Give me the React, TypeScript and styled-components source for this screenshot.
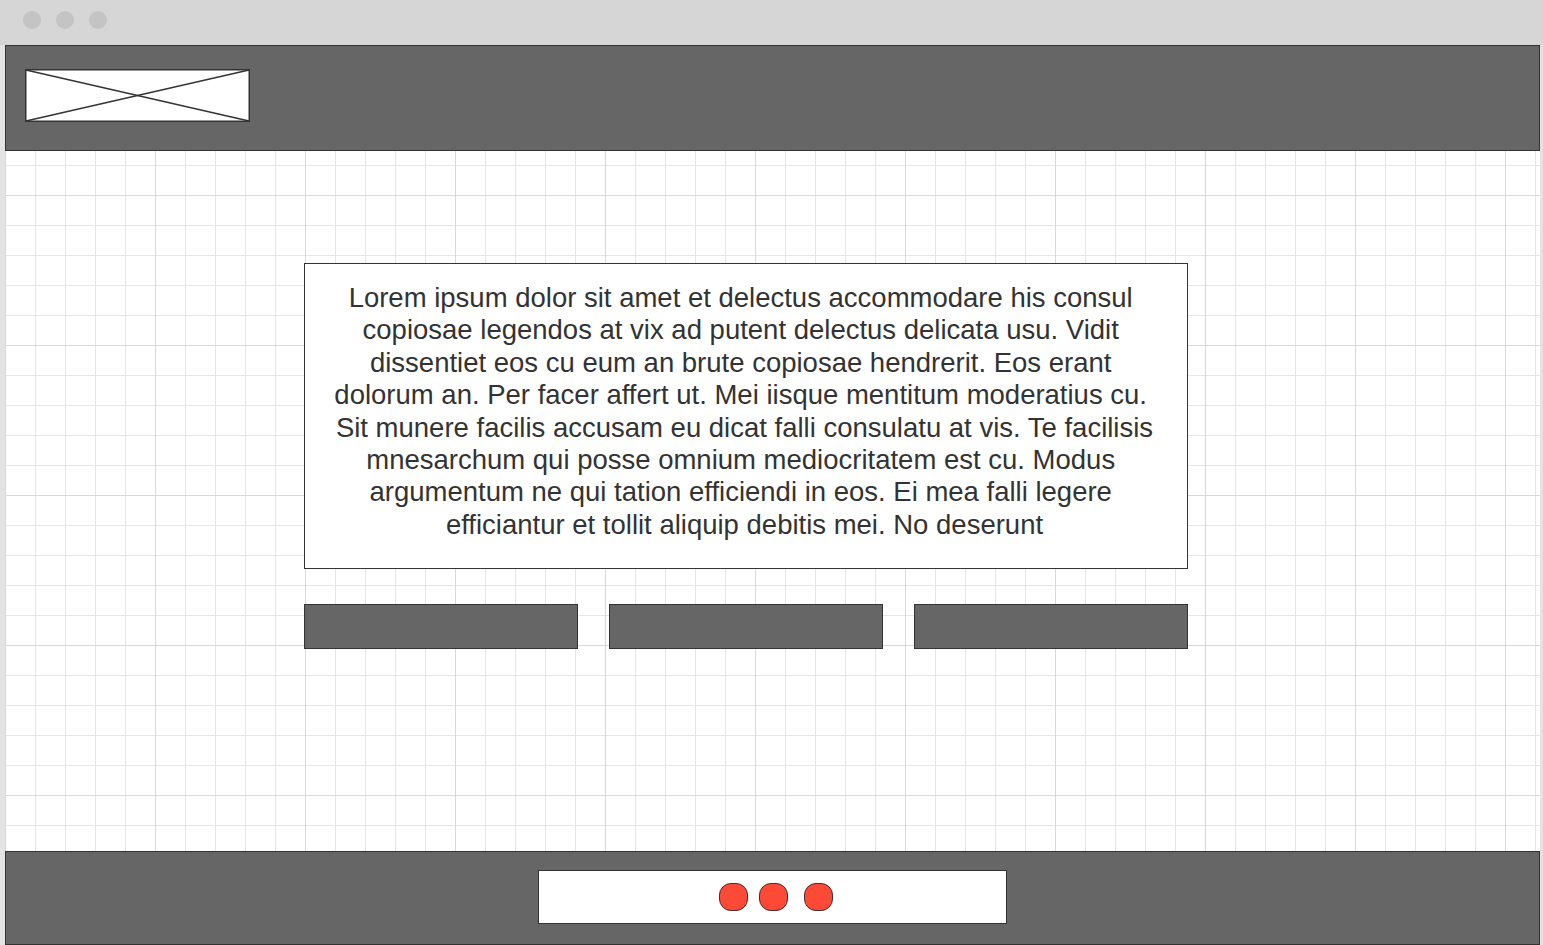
import React from "react";
import styled, { createGlobalStyle } from "styled-components";

const GlobalStyle = createGlobalStyle`
  html, body { margin: 0; padding: 0; }
  body {
    background: #e3e3e3;
    font-family: "Liberation Sans", Arial, sans-serif;
    overflow: hidden;
  }
`;

const Window = styled.div`
  width: 1543px;
  height: 945px;
  display: flex;
  flex-direction: column;
  background: #e3e3e3;
`;

const TitleBar = styled.div`
  height: 45px;
  flex: none;
  background: #d6d6d6;
  display: flex;
  align-items: center;
  gap: 15px;
  padding: 0 0 6px 23px;
  box-sizing: border-box;
`;

const TitleDot = styled.span`
  width: 18px;
  height: 18px;
  border-radius: 50%;
  background: #c4c4c4;
`;

const Body = styled.div`
  flex: 1;
  display: flex;
  flex-direction: column;
  margin: 0 3px 0 5px;
  background-color: #fff;
  background-image:
    linear-gradient(to right, #d8d8d8 1px, transparent 1px),
    linear-gradient(to bottom, #d8d8d8 1px, transparent 1px),
    linear-gradient(to right, #e6e6e6 1.5px, transparent 1.5px),
    linear-gradient(to bottom, #e6e6e6 1.5px, transparent 1.5px);
  background-size: 150px 150px, 150px 150px, 30px 30px, 30px 30px;
`;

const Header = styled.header`
  height: 106px;
  flex: none;
  box-sizing: border-box;
  background: #666;
  border: 1px solid #333;
  padding: 23px 19px;
  display: flex;
  align-items: flex-start;
`;

const Canvas = styled.main`
  flex: 1;
  padding: 112px 0 0 299px;
  display: flex;
  flex-direction: column;
  gap: 35px;
`;

const TextCard = styled.div`
  width: 884px;
  height: 306px;
  box-sizing: border-box;
  background: #fff;
  border: 1px solid #333;
  padding: 18px 3px 0 0;
  text-align: center;
  color: #333;
  font-size: 27.5px;
  line-height: 32.4px;
`;

const Line = styled.span`
  display: block;
  white-space: pre;
`;

const ButtonRow = styled.div`
  width: 884px;
  display: grid;
  grid-template-columns: repeat(3, 1fr);
  column-gap: 31px;
`;

const Bar = styled.div`
  height: 45px;
  box-sizing: border-box;
  background: #666;
  border: 1px solid #333;
`;

const Footer = styled.footer`
  height: 94px;
  flex: none;
  box-sizing: border-box;
  background: #666;
  border: 1px solid #333;
  padding: 18px 0 0 532px;
`;

const Pager = styled.div`
  width: 469px;
  height: 54px;
  box-sizing: border-box;
  background: #fff;
  border: 1px solid #333;
  display: flex;
  align-items: center;
  padding-left: 180px;
`;

const PagerDot = styled.span<{ $gap: number }>`
  width: 29px;
  height: 28px;
  box-sizing: border-box;
  border-radius: 12px;
  background: #fc4a36;
  border: 1.5px solid #4f2a2a;
  margin-left: ${(p) => p.$gap}px;
`;

const lines = [
  "Lorem ipsum dolor sit amet et delectus accommodare his consul\u00a0",
  "copiosae legendos at vix ad putent delectus delicata usu. Vidit\u00a0",
  "dissentiet eos cu eum an brute copiosae hendrerit. Eos erant\u00a0",
  "dolorum an. Per facer affert ut. Mei iisque mentitum moderatius cu.\u00a0",
  "Sit munere facilis accusam eu dicat falli consulatu at vis. Te facilisis",
  "mnesarchum qui posse omnium mediocritatem est cu. Modus\u00a0",
  "argumentum ne qui tation efficiendi in eos. Ei mea falli legere\u00a0",
  "efficiantur et tollit aliquip debitis mei. No deserunt",
];

const LogoPlaceholder = () => (
  <svg width="225" height="53" viewBox="0 0 225 53">
    <rect x="0.75" y="0.75" width="223.5" height="51.5" fill="#fff" stroke="#333" strokeWidth="1.5" />
    <line x1="1" y1="1" x2="224" y2="52" stroke="#333" strokeWidth="1.3" />
    <line x1="1" y1="52" x2="224" y2="1" stroke="#333" strokeWidth="1.3" />
  </svg>
);

export default function App() {
  return (
    <>
      <GlobalStyle />
      <Window>
        <TitleBar>
          <TitleDot />
          <TitleDot />
          <TitleDot />
        </TitleBar>
        <Body>
          <Header>
            <LogoPlaceholder />
          </Header>
          <Canvas>
            <TextCard>
              {lines.map((l) => (
                <Line key={l}>{l}</Line>
              ))}
            </TextCard>
            <ButtonRow>
              <Bar />
              <Bar />
              <Bar />
            </ButtonRow>
          </Canvas>
          <Footer>
            <Pager>
              <PagerDot $gap={0} />
              <PagerDot $gap={11} />
              <PagerDot $gap={16} />
            </Pager>
          </Footer>
        </Body>
      </Window>
    </>
  );
}
